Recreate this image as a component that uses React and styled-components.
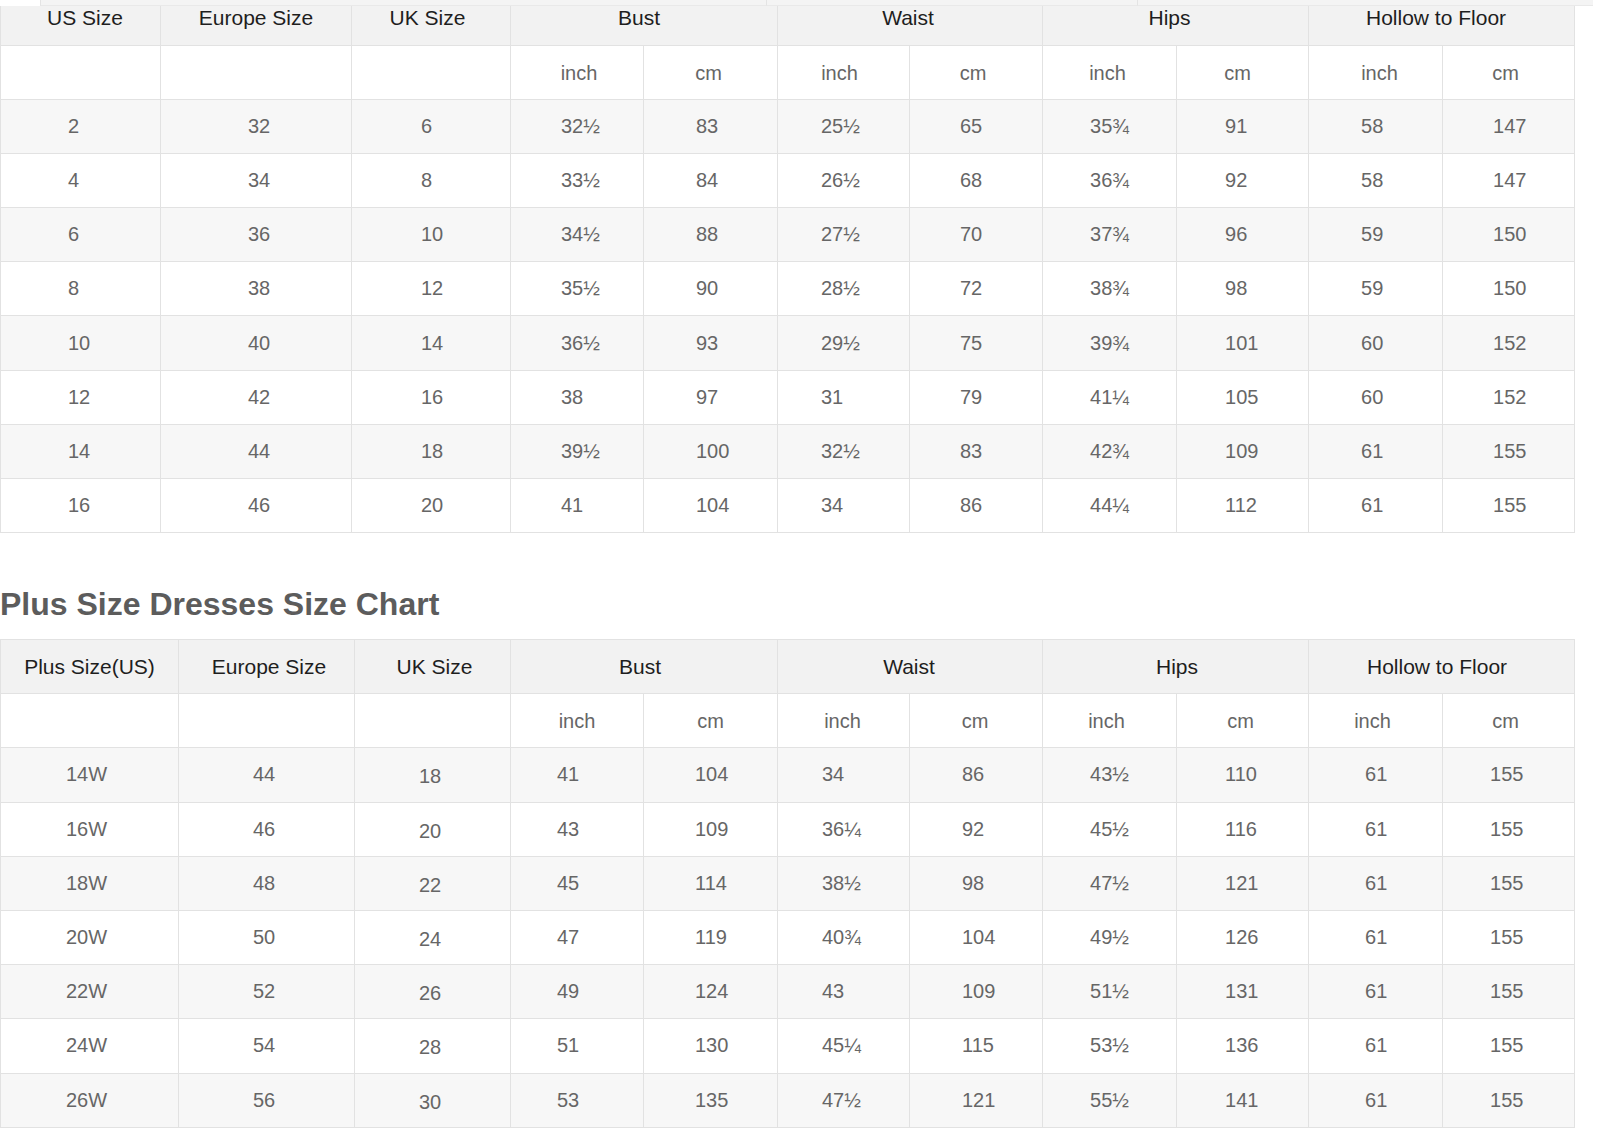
import React from "react";
import styled, { createGlobalStyle } from "styled-components";

const GlobalStyle = createGlobalStyle`
  html, body { margin: 0; padding: 0; background: #ffffff; }
  body { font-family: "Liberation Sans", Arial, sans-serif; }
`;

const Page = styled.div`
  position: relative;
  width: 1600px;
  padding-bottom: 10px;
`;

const TopStrip = styled.div`
  position: absolute;
  top: 0;
  left: 0;
  right: 0;
  height: 6px;
  display: flex;
  z-index: 2;
  background: #ffffff;
`;

const StripSeg = styled.div`
  width: ${(p) => p.$w}px;
  height: 100%;
  box-sizing: border-box;
  background: ${(p) => (p.$blank ? "#ffffff" : "#f4f4f4")};
  border-left: ${(p) => (p.$blank ? "none" : "1px solid #e4e4e4")};
  border-bottom: ${(p) => (p.$blank ? "none" : "1px solid #e9e9e9")};
`;

const Table = styled.table`
  border-collapse: collapse;
  table-layout: fixed;
  width: 1575px;
  font-size: 20px;
`;

const HeadCell = styled.th`
  background: #f2f2f2;
  color: #1e1e1e;
  font-weight: normal;
  font-size: 21px;
  text-align: center;
  vertical-align: middle;
  border: 1px solid #e2e2e2;
  border-top: ${(p) => (p.$cut ? "none" : "1px solid #e2e2e2")};
  padding-top: 0;
  padding-bottom: ${(p) => (p.$cut ? 8 : 0)}px;
  padding-left: ${(p) => (p.$shift > 0 ? p.$shift * 2 : 0)}px;
  padding-right: ${(p) => (p.$shift < 0 ? -p.$shift * 2 : 0)}px;
  white-space: nowrap;
`;

const HeadRow = styled.tr`
  height: ${(p) => p.$h}px;
`;

const BodyRow = styled.tr`
  height: 54.2px;
  background: ${(p) => (p.$shade ? "#f7f7f7" : "#ffffff")};
`;

const UnitCell = styled.td`
  border: 1px solid #e2e2e2;
  color: #666666;
  text-align: center;
  vertical-align: middle;
  padding-top: ${(p) => (p.$lift ? 0 : 2)}px;
  padding-bottom: 0;
  padding-left: ${(p) => (p.$shift > 0 ? p.$shift * 2 : 0)}px;
  padding-right: ${(p) => (p.$shift < 0 ? -p.$shift * 2 : 0)}px;
`;

const DataCell = styled.td`
  border: 1px solid #e2e2e2;
  color: #666666;
  text-align: left;
  vertical-align: middle;
  padding: ${(p) => p.$drop || 0}px 0 0 ${(p) => p.$indent}px;
  white-space: nowrap;
`;

const Title = styled.h2`
  margin: 54px 0 18px 0;
  font-size: 32px;
  line-height: 34px;
  font-weight: bold;
  color: #5c5c5c;
`;

const colWidths1 = [160, 191, 159, 133, 134, 132, 133, 134, 132, 134, 132];
const colWidths2 = [178, 176, 156, 133, 134, 132, 133, 134, 132, 134, 132];

const indents1 = [67, 87, 69, 50, 52, 43, 50, 47, 48, 52, 50];
const indents2 = [65, 74, 64, 46, 51, 44, 52, 47, 48, 56, 47];

const rows1 = [
  ["2", "32", "6", "32½", "83", "25½", "65", "35¾", "91", "58", "147"],
  ["4", "34", "8", "33½", "84", "26½", "68", "36¾", "92", "58", "147"],
  ["6", "36", "10", "34½", "88", "27½", "70", "37¾", "96", "59", "150"],
  ["8", "38", "12", "35½", "90", "28½", "72", "38¾", "98", "59", "150"],
  ["10", "40", "14", "36½", "93", "29½", "75", "39¾", "101", "60", "152"],
  ["12", "42", "16", "38", "97", "31", "79", "41¼", "105", "60", "152"],
  ["14", "44", "18", "39½", "100", "32½", "83", "42¾", "109", "61", "155"],
  ["16", "46", "20", "41", "104", "34", "86", "44¼", "112", "61", "155"],
];

const rows2 = [
  ["14W", "44", "18", "41", "104", "34", "86", "43½", "110", "61", "155"],
  ["16W", "46", "20", "43", "109", "36¼", "92", "45½", "116", "61", "155"],
  ["18W", "48", "22", "45", "114", "38½", "98", "47½", "121", "61", "155"],
  ["20W", "50", "24", "47", "119", "40¾", "104", "49½", "126", "61", "155"],
  ["22W", "52", "26", "49", "124", "43", "109", "51½", "131", "61", "155"],
  ["24W", "54", "28", "51", "130", "45¼", "115", "53½", "136", "61", "155"],
  ["26W", "56", "30", "53", "135", "47½", "121", "55½", "141", "61", "155"],
];

const groups = ["Bust", "Waist", "Hips", "Hollow to Floor"];

function SizeTable({
  firstHeads,
  widths,
  indents,
  rows,
  cut,
  headHeight,
  drops,
  shifts,
  unitShifts,
  unitLift,
}) {
  return (
    <Table>
      <colgroup>
        {widths.map((w, i) => (
          <col key={i} style={{ width: w }} />
        ))}
      </colgroup>
      <thead>
        <HeadRow $h={headHeight}>
          {firstHeads.map((h, i) => (
            <HeadCell key={h} $cut={cut} $shift={shifts[i]}>
              {h}
            </HeadCell>
          ))}
          {groups.map((g, i) => (
            <HeadCell key={g} colSpan={2} $cut={cut} $shift={shifts[i + 3]}>
              {g}
            </HeadCell>
          ))}
        </HeadRow>
      </thead>
      <tbody>
        <BodyRow>
          <UnitCell />
          <UnitCell />
          <UnitCell />
          {groups.map((g, i) => (
            <React.Fragment key={g}>
              <UnitCell $shift={unitShifts[i * 2]} $lift={unitLift}>
                inch
              </UnitCell>
              <UnitCell $shift={unitShifts[i * 2 + 1]} $lift={unitLift}>
                cm
              </UnitCell>
            </React.Fragment>
          ))}
        </BodyRow>
        {rows.map((r, ri) => (
          <BodyRow key={ri} $shade={ri % 2 === 0}>
            {r.map((v, ci) => (
              <DataCell key={ci} $indent={indents[ci]} $drop={drops ? drops[ci] : 0}>
                {v}
              </DataCell>
            ))}
          </BodyRow>
        ))}
      </tbody>
    </Table>
  );
}

export default function App() {
  return (
    <>
      <GlobalStyle />
      <Page>
        <TopStrip>
          <StripSeg $w={40} $blank />
          <StripSeg $w={726} />
          <StripSeg $w={371} />
          <StripSeg $w={456} />
        </TopStrip>
        <SizeTable
          firstHeads={["US Size", "Europe Size", "UK Size"]}
          widths={colWidths1}
          indents={indents1}
          rows={rows1}
          cut
          headHeight={45}
          shifts={[4.5, 0, -3.5, -5, -2, -6, -5.5]}
          unitShifts={[2, -2, -4, -3, -2, -5, 4, -3]}
        />
        <Title>Plus Size Dresses Size Chart</Title>
        <SizeTable
          firstHeads={["Plus Size(US)", "Europe Size", "UK Size"]}
          widths={colWidths2}
          indents={indents2}
          rows={rows2}
          headHeight={54}
          shifts={[0, 2.5, 2, -4, -1, 1.5, -4.5]}
          unitShifts={[0, 0, -1, -1, -3, -2, -3, -3]}
          unitLift={false}
          drops={[0, 0, 4, 0, 0, 0, 0, 0, 0, 0, 0]}
        />
      </Page>
    </>
  );
}
